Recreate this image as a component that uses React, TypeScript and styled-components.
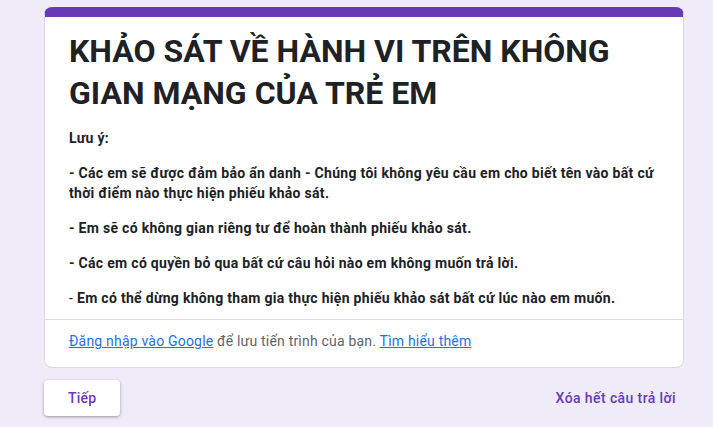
import React from "react";
import styled, { createGlobalStyle } from "styled-components";

const Global = createGlobalStyle`
  html, body { margin: 0; padding: 0; background: #f0ebf8; }
  body { font-family: Roboto, "Noto Sans", Arial, sans-serif; color: #202124; }
  * { box-sizing: border-box; }
`;

const Page = styled.div`
  min-height: 427px;
  padding: 7px 0 0 44px;
`;

const Column = styled.div`
  width: 640px;
`;

const Card = styled.div`
  background: #fff;
  border: 1px solid #dadce0;
  border-top: 10px solid #673ab7;
  border-radius: 8px;
  overflow: hidden;
`;

const Content = styled.div`
  padding: 13px 24px 11px;
`;

const Title = styled.h1`
  margin: 0 0 14px;
  font-size: 32px;
  line-height: 42px;
  font-weight: 700;
  color: #202124;
  letter-spacing: 0;
`;

const Para = styled.p`
  margin: 0 0 15px;
  font-size: 14px;
  line-height: 20px;
  font-weight: 700;
  letter-spacing: 0.3px;
  color: #202124;
  &:last-child { margin-bottom: 0; }
`;

const Plain = styled.span`
  font-weight: 400;
`;

const Footer = styled.div`
  border-top: 1px solid #dadce0;
  padding: 11px 24px 16px;
  font-size: 14px;
  line-height: 20px;
  letter-spacing: 0.2px;
  color: #5f6368;
`;

const Link = styled.a`
  color: #1a73e8;
  text-decoration: underline;
  cursor: pointer;
`;

const Actions = styled.div`
  display: flex;
  align-items: center;
  justify-content: space-between;
  margin-top: 12px;
`;

const NextButton = styled.button`
  height: 36px;
  padding: 0 24px;
  border: none;
  border-radius: 4px;
  background: #fff;
  color: #673ab7;
  font-family: Roboto, Arial, sans-serif;
  font-size: 14px;
  font-weight: 500;
  letter-spacing: 0.25px;
  box-shadow: 0 1px 2px 0 rgba(60, 64, 67, 0.3), 0 1px 3px 1px rgba(60, 64, 67, 0.15);
  cursor: pointer;
`;

const ClearButton = styled.button`
  height: 36px;
  padding: 0 8px;
  border: none;
  background: transparent;
  color: #673ab7;
  font-family: Roboto, Arial, sans-serif;
  font-size: 14px;
  font-weight: 500;
  letter-spacing: 0.4px;
  cursor: pointer;
`;

export default function App() {
  return (
    <>
      <Global />
      <Page>
        <Column>
          <Card>
            <Content>
              <Title>KHẢO SÁT VỀ HÀNH VI TRÊN KHÔNG GIAN MẠNG CỦA TRẺ EM</Title>
              <Para>Lưu ý:</Para>
              <Para>
                - Các em sẽ được đảm bảo ẩn danh - Chúng tôi không yêu cầu em cho biết tên vào bất cứ thời điểm nào thực hiện phiếu khảo sát.
              </Para>
              <Para>- Em sẽ có không gian riêng tư để hoàn thành phiếu khảo sát.</Para>
              <Para>- Các em có quyền bỏ qua bất cứ câu hỏi nào em không muốn trả lời.</Para>
              <Para>
                <Plain>-</Plain> Em có thể dừng không tham gia thực hiện phiếu khảo sát bất cứ lúc nào em muốn.
              </Para>
            </Content>
            <Footer>
              <Link>Đăng nhập vào Google</Link> để lưu tiến trình của bạn. <Link>Tìm hiểu thêm</Link>
            </Footer>
          </Card>
          <Actions>
            <NextButton>Tiếp</NextButton>
            <ClearButton>Xóa hết câu trả lời</ClearButton>
          </Actions>
        </Column>
      </Page>
    </>
  );
}
